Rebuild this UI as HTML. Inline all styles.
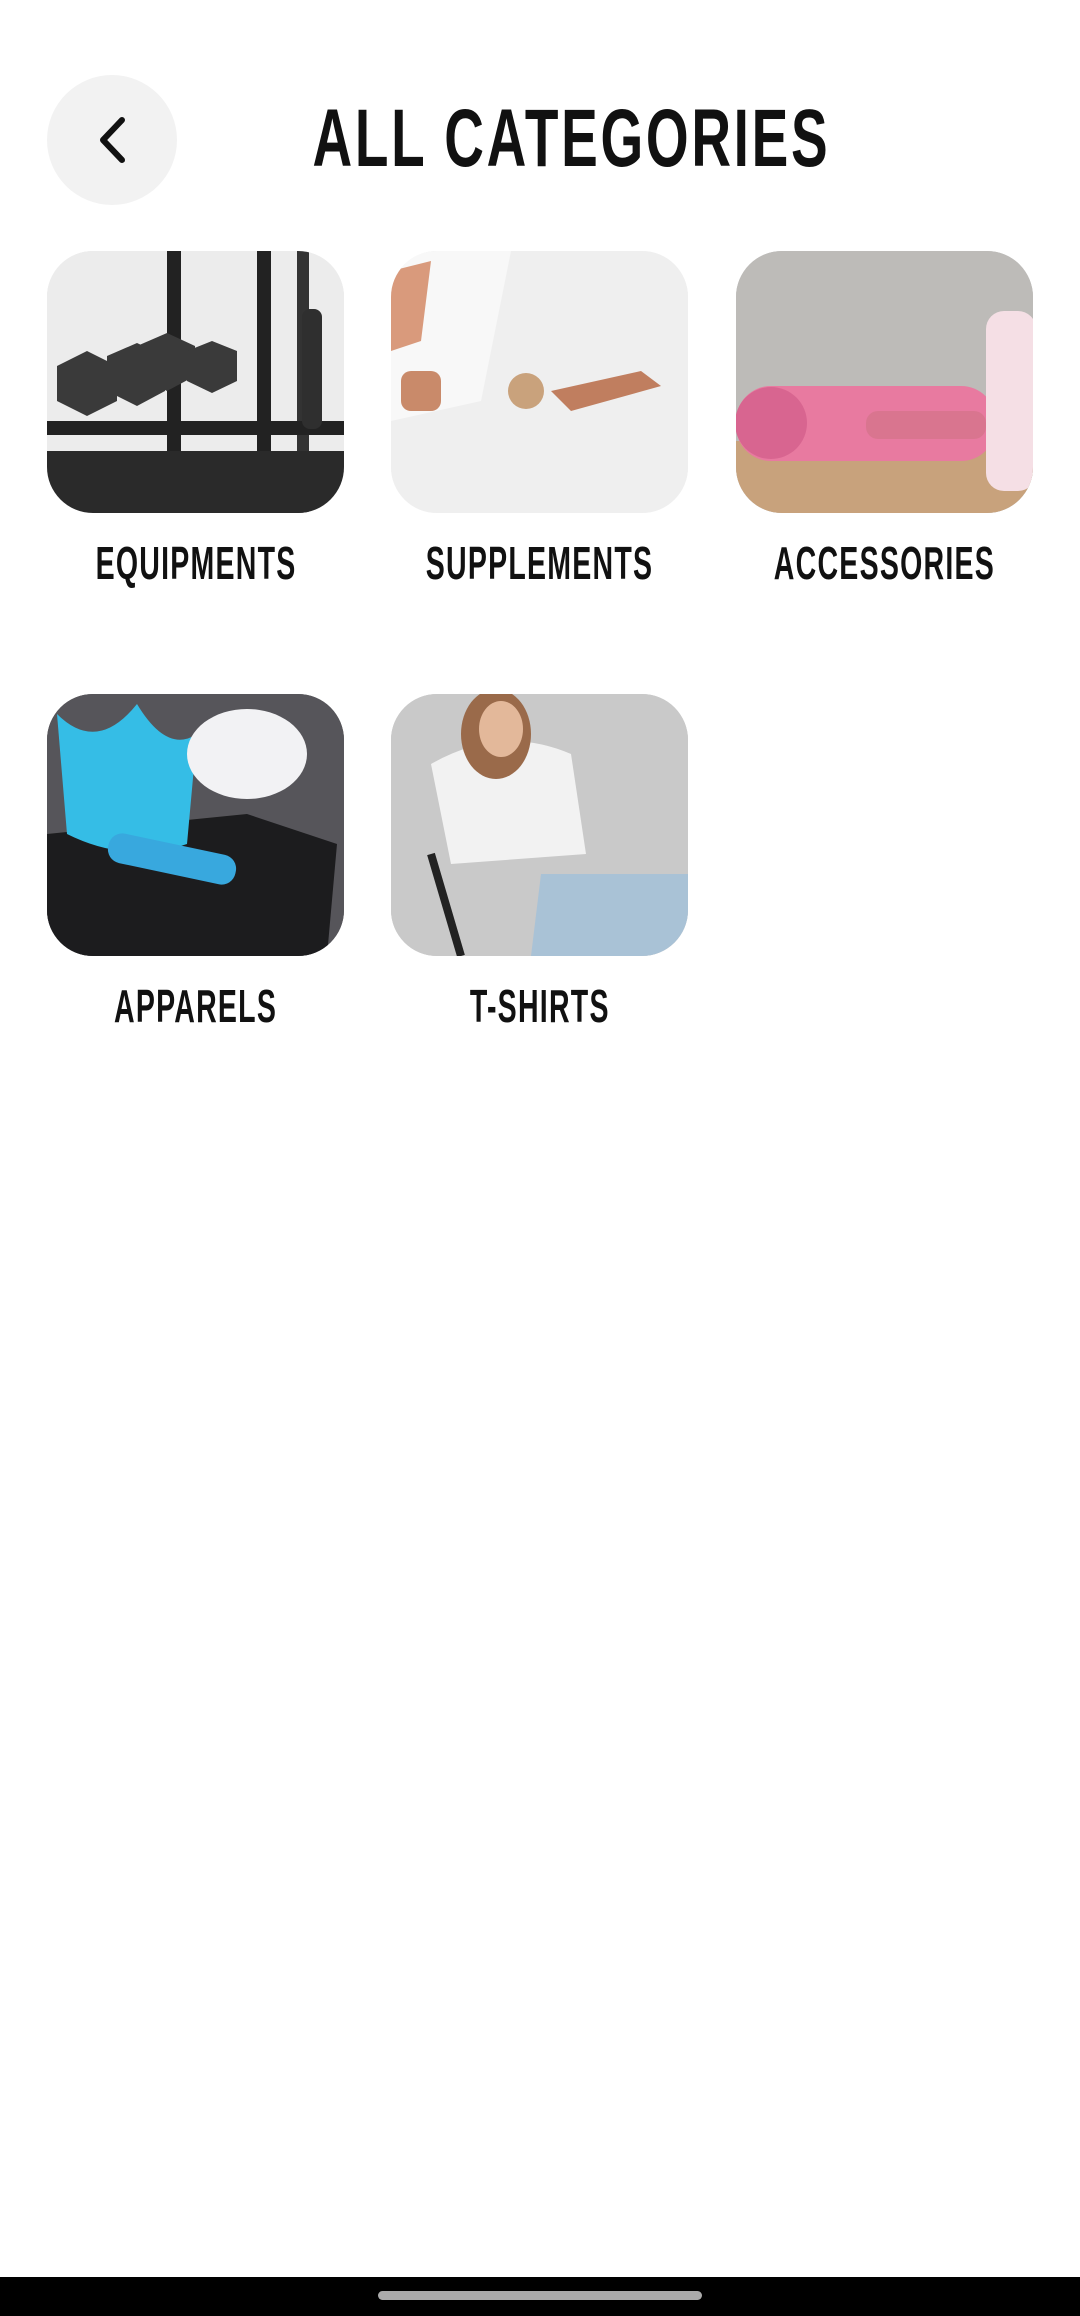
<!DOCTYPE html>
<html><head><meta charset="utf-8">
<style>
*{margin:0;padding:0;box-sizing:border-box}
body{width:1080px;height:2316px;background:#fff;position:relative;overflow:hidden;font-family:"Liberation Sans",sans-serif}
.back{position:absolute;left:47px;top:75px;width:130px;height:130px;border-radius:50%;background:#f2f2f2}
.title{position:absolute;left:71px;width:1000px;top:98px;text-align:center;font-weight:bold;font-size:82px;line-height:82px;color:#111;white-space:nowrap}
.title span{display:inline-block;transform:scaleX(0.67);letter-spacing:4px}
.lbl span{display:inline-block;transform:scaleX(0.62);letter-spacing:2px}
.card{position:absolute;width:297px;height:262px;border-radius:46px;overflow:hidden}
.lbl{position:absolute;width:600px;text-align:center;font-weight:bold;font-size:46px;line-height:46px;color:#111;white-space:nowrap}
.bar{position:absolute;left:0;top:2277px;width:1080px;height:39px;background:#000}
.handle{position:absolute;left:378px;top:2291px;width:324px;height:9px;border-radius:5px;background:#aaa}
</style></head><body>
<div class="back"><svg width="130" height="130" viewBox="0 0 130 130"><path d="M75 45 L56 65 L75 85" fill="none" stroke="#111" stroke-width="6" stroke-linecap="round" stroke-linejoin="round"/></svg></div>
<div class="title"><span>ALL CATEGORIES</span></div>

<div class="card" style="left:47px;top:251px;background:#e8e8e8">
<svg width="297" height="262"><rect width="297" height="262" fill="#ececec"/>
<rect x="120" y="0" width="14" height="262" fill="#222"/><rect x="210" y="0" width="14" height="262" fill="#222"/><rect x="250" y="0" width="12" height="262" fill="#333"/>
<rect x="0" y="170" width="297" height="14" fill="#222"/>
<g fill="#3a3a3a"><polygon points="10,115 40,100 70,115 70,150 40,165 10,150"/><polygon points="60,105 90,92 118,105 118,140 90,155 60,140"/><polygon points="90,95 120,82 148,95 148,125 120,140 90,125"/><polygon points="140,100 165,90 190,100 190,130 165,142 140,130"/></g>
<rect x="0" y="200" width="297" height="62" fill="#2a2a2a"/><rect x="255" y="58" width="20" height="120" rx="8" fill="#2f2f2f"/></svg></div>
<div class="lbl" style="left:-104px;top:540px"><span>EQUIPMENTS</span></div>

<div class="card" style="left:391px;top:251px;background:#f0f0f0">
<svg width="297" height="262"><rect width="297" height="262" fill="#efefef"/>
<polygon points="0,0 120,0 90,150 0,170" fill="#f8f8f8"/><polygon points="0,20 40,10 30,90 0,100" fill="#d99a7c"/><rect x="10" y="120" width="40" height="40" rx="10" fill="#c98a6a"/>
<circle cx="135" cy="140" r="18" fill="#c9a27c"/><path d="M160 140 L250 120 L270 135 L180 160Z" fill="#c07e5f"/></svg></div>
<div class="lbl" style="left:240px;top:540px"><span>SUPPLEMENTS</span></div>

<div class="card" style="left:736px;top:251px;background:#bdbdbd">
<svg width="297" height="262"><rect width="297" height="262" fill="#bdbbb8"/><rect y="190" width="297" height="72" fill="#c8a27c"/>
<rect x="0" y="135" width="260" height="75" rx="35" fill="#e87aa0"/><circle cx="35" cy="172" r="36" fill="#d86590"/>
<rect x="130" y="160" width="120" height="28" rx="12" fill="#d9758f"/><rect x="250" y="60" width="50" height="180" rx="18" fill="#f5dfe5"/></svg></div>
<div class="lbl" style="left:584px;top:540px"><span>ACCESSORIES</span></div>

<div class="card" style="left:47px;top:694px;background:#555">
<svg width="297" height="262"><rect width="297" height="262" fill="#56555a"/>
<path d="M0 140 L200 120 L290 150 L280 262 L0 262Z" fill="#1c1c1e"/>
<path d="M10 20 Q50 60 90 10 Q120 60 150 40 L140 150 Q80 170 20 140Z" fill="#35bde6"/>
<ellipse cx="200" cy="60" rx="60" ry="45" fill="#f2f2f4"/><rect x="60" y="150" width="130" height="30" rx="14" transform="rotate(12 125 165)" fill="#38a8de"/></svg></div>
<div class="lbl" style="left:-104px;top:983px"><span>APPARELS</span></div>

<div class="card" style="left:391px;top:694px;background:#c6c6c6">
<svg width="297" height="262"><rect width="297" height="262" fill="#c9c9c9"/>
<path d="M40 70 Q110 30 180 60 L195 160 L60 170Z" fill="#f2f2f2"/><ellipse cx="105" cy="40" rx="35" ry="45" fill="#9a6a4a"/><ellipse cx="110" cy="35" rx="22" ry="28" fill="#e3b89a"/>
<path d="M150 180 L297 180 L297 262 L140 262Z" fill="#a9c2d6"/><path d="M40 160 L70 262" stroke="#222" stroke-width="8"/></svg></div>
<div class="lbl" style="left:240px;top:983px"><span>T-SHIRTS</span></div>

<div class="bar"></div><div class="handle"></div>
</body></html>
